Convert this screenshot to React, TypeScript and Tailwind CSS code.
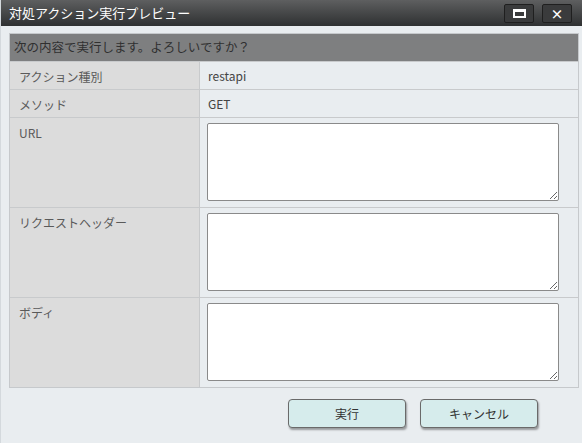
const font = { fontFamily: '"Noto Sans CJK JP", "Noto Sans", sans-serif' }

type Row = { label: string; value?: string }

const rows: Row[] = [
  { label: "アクション種別", value: "restapi" },
  { label: "メソッド", value: "GET" },
  { label: "URL" },
  { label: "リクエストヘッダー" },
  { label: "ボディ" },
]

export default function App() {
  return (
    <div className="h-[445px] w-[584px] bg-white" style={font}>
      <div className="flex h-[443px] w-[582px] flex-col border-l border-[#d4d9dd] bg-[#e9edf0]">
        <div className="flex h-[26px] shrink-0 items-center justify-between bg-gradient-to-b from-[#5e5f60] to-[#2f3132] pl-[8px] pr-[10px]">
          <span className="text-[13px] text-white">対処アクション実行プレビュー</span>
          <div className="flex gap-[8px]">
            <button className="flex h-[19px] w-[30px] items-center justify-center rounded-[2px] border border-[#1f1f1f] bg-[#3a3b3c]">
              <span className="block h-[9px] w-[13px] border-2 border-t-[3px] border-white" />
            </button>
            <button className="flex h-[19px] w-[30px] items-center justify-center rounded-[2px] border border-[#1f1f1f] bg-[#3a3b3c] text-[13px] font-bold leading-none text-white">
              ×
            </button>
          </div>
        </div>

        <div className="ml-[8px] mr-[3px] mt-[7px] border border-[#c6c9cc]">
          <div className="flex h-[27px] items-center bg-[#7e7f80] px-[4px] text-[12.5px] text-[#303030]">
            次の内容で実行します。よろしいですか？
          </div>
          {rows.map((r) => (
            <div key={r.label} className="flex border-t border-[#c8cacc]">
              <div className="w-[190px] shrink-0 border-r border-[#c8cacc] bg-[#dcdcdc] px-[9px] pt-[6px] text-[12px] text-[#5a5a5a]">
                {r.label}
              </div>
              {r.value ? (
                <div className="flex h-[27px] flex-1 items-center px-[8px] text-[12px] text-[#444]">{r.value}</div>
              ) : (
                <div className="flex-1 px-[7px] pb-[6px] pt-[5px]">
                  <textarea className="block h-[78px] w-[352px] resize rounded-[2px] border border-[#8a8a8a] bg-white" />
                </div>
              )}
            </div>
          ))}
        </div>

        <div className="mt-[11px] flex gap-[14px] pl-[287px]">
          <button className="h-[29px] w-[118px] rounded-[4px] border border-[#6a6a6a] bg-[#d6ecec] text-[12px] text-[#333] shadow-[1px_2px_2px_rgba(0,0,0,0.35)]">
            実行
          </button>
          <button className="h-[29px] w-[118px] rounded-[4px] border border-[#6a6a6a] bg-[#d6ecec] text-[12px] text-[#333] shadow-[1px_2px_2px_rgba(0,0,0,0.35)]">
            キャンセル
          </button>
        </div>
      </div>
    </div>
  )
}
